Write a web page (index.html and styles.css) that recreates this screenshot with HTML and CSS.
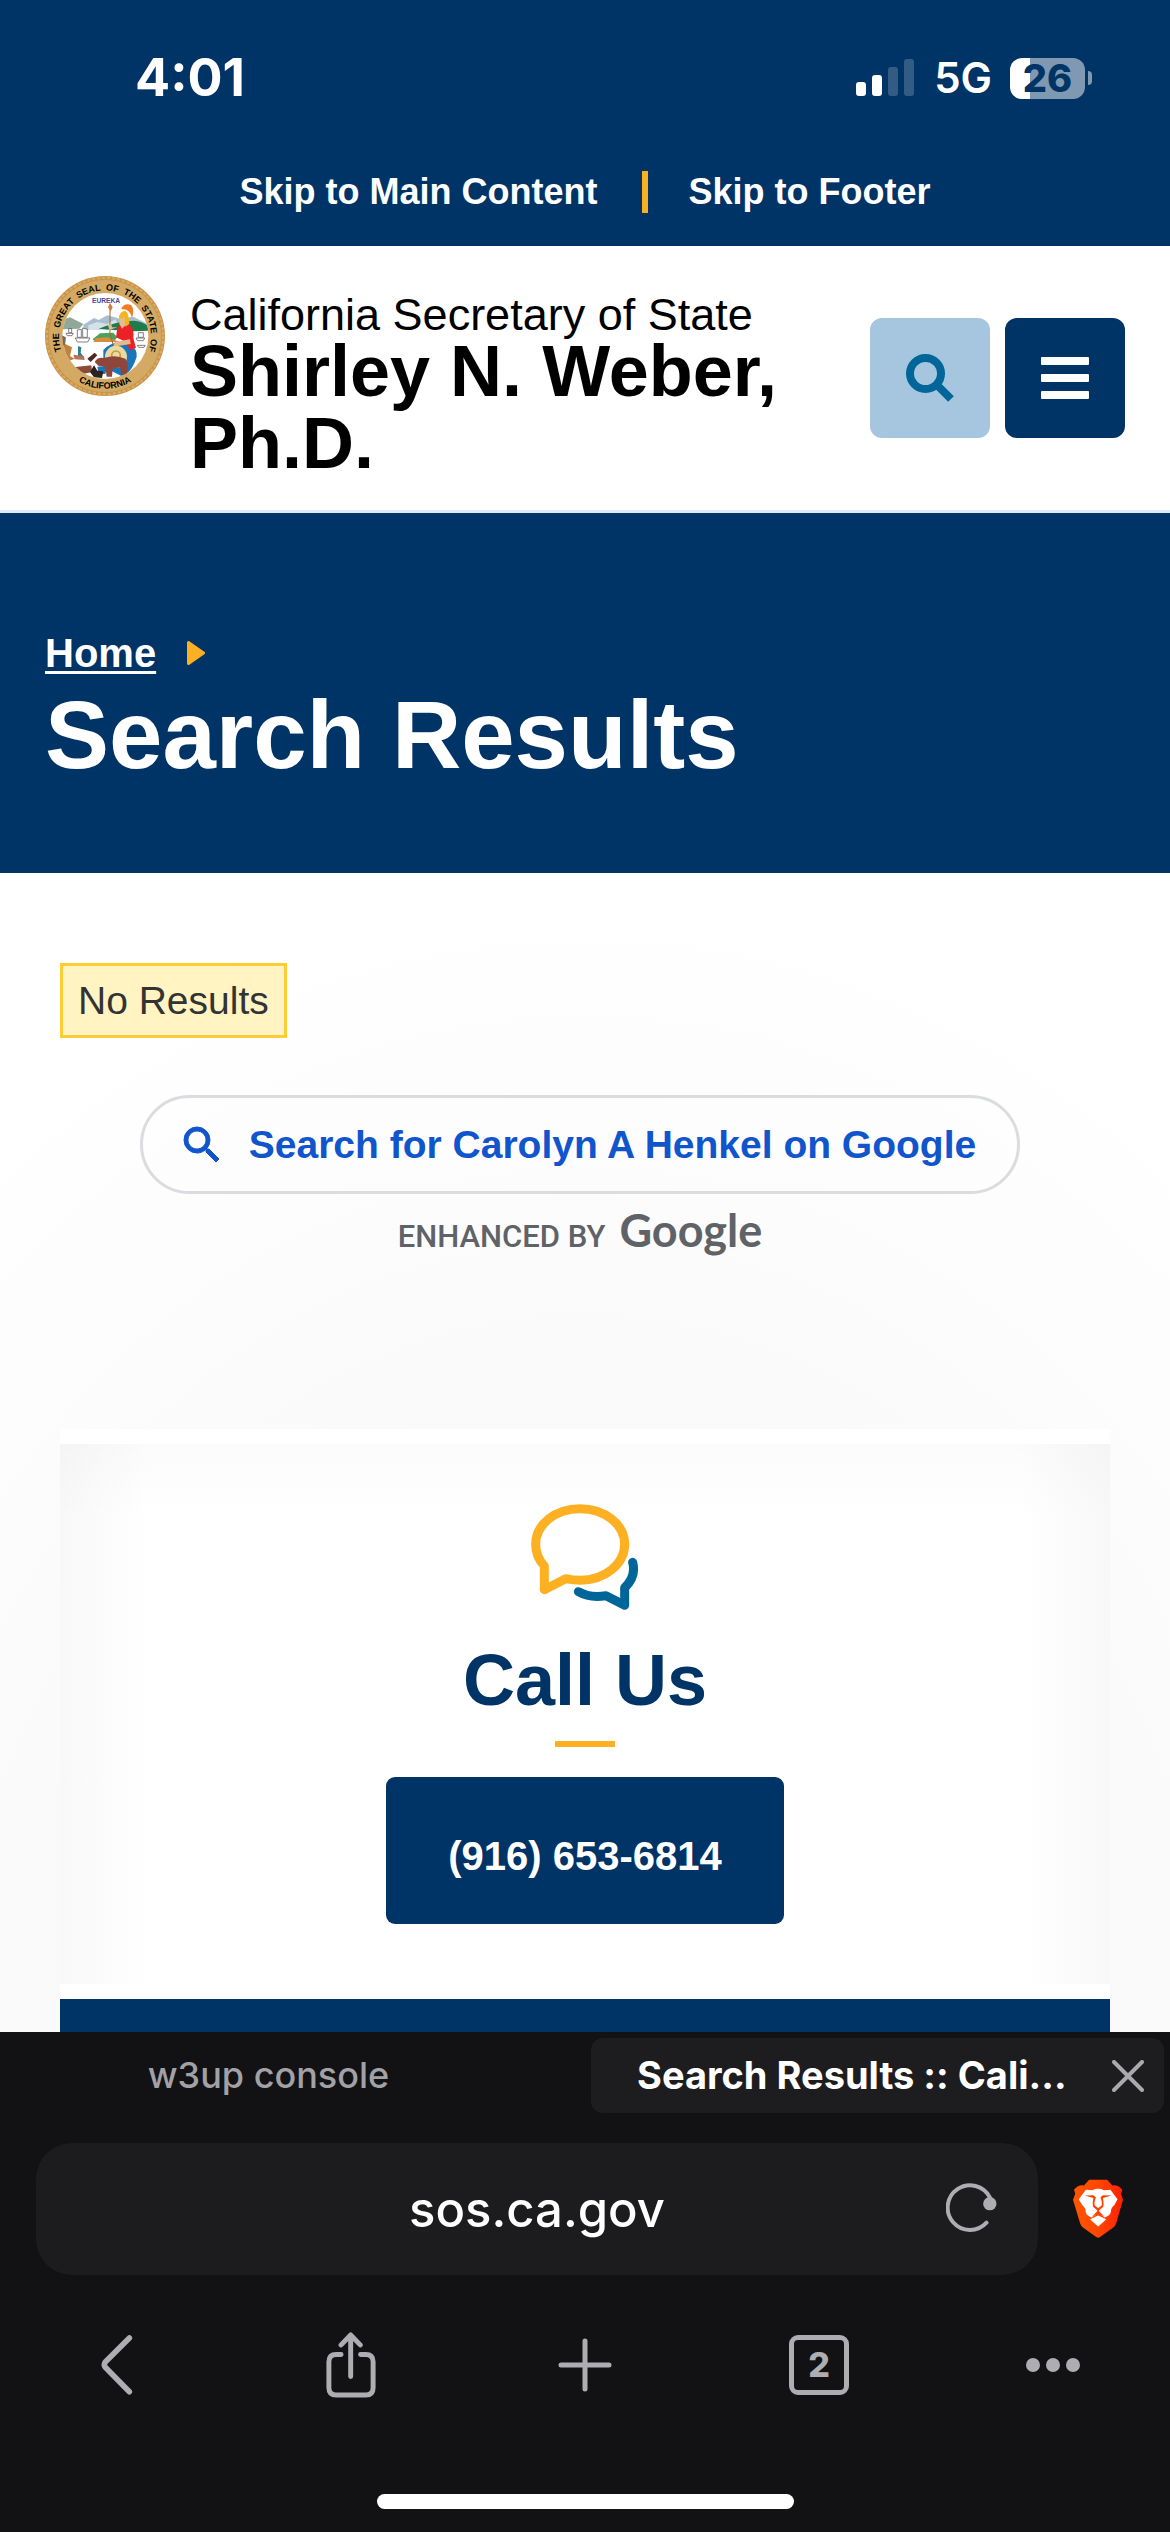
FILE: index.html
```html
<!DOCTYPE html>
<html lang="en">
<head>
<meta charset="utf-8">
<meta name="viewport" content="width=device-width, initial-scale=1">
<title>Search Results :: California Secretary of State</title>
<link rel="stylesheet" href="styles.css">
</head>
<body>
<div class="status">
  <span class="status-time">4:01</span>
  <div class="status-right">
    <svg class="signal" viewBox="0 0 58 38" aria-hidden="true">
      <rect x="0" y="23" width="10" height="14" rx="3"/>
      <rect x="16" y="16" width="10" height="21" rx="3"/>
      <rect class="dim" x="32" y="8" width="10" height="29" rx="3"/>
      <rect class="dim" x="48" y="0" width="10" height="37" rx="3"/>
    </svg>
    <span class="network">5G</span>
    <span class="battery"><span class="battery-level">26</span><span class="battery-tip"></span></span>
  </div>
</div>

<nav class="skip" aria-label="Skip links">
  <a href="#main">Skip to Main Content</a>
  <span class="skip-divider"></span>
  <a href="#footer">Skip to Footer</a>
</nav>

<header class="site-header">
  <svg class="seal" viewBox="0 0 120 120" role="img" aria-label="Seal of the State of California">
    <defs>
      <path id="ring-top" d="M21.5 85.5A46 46 0 1 1 98.5 85.5"/>
      <path id="ring-bottom" d="M14 86A53 53 0 0 0 106 86"/>
      <clipPath id="seal-inner"><circle cx="256" cy="258" r="129"/></clipPath>
    </defs>
    <circle cx="60" cy="60" r="60" fill="#c8954a"/>
    <circle cx="60" cy="60" r="58" fill="none" stroke="#dbab66" stroke-width="2" stroke-dasharray="3 2"/>
    <circle cx="60" cy="60" r="56" fill="#d3a963"/>
    <g transform="translate(-25 -26) scale(.33333)">
      <circle cx="256" cy="258" r="129" fill="#fff"/>
      <g clip-path="url(#seal-inner)">
        <path d="M120 212L150 202L190 222L178 236L120 238Z" fill="#8fa898"/>
        <path d="M190 224L222 204L236 210L262 196L300 206L340 200L392 226V240H190Z" fill="#a9bfcf"/>
        <path d="M205 226L232 216L262 222L286 208L302 240H205Z" fill="#d5e1e8"/>
        <path d="M236 236Q290 214 340 212Q376 214 400 242L340 244L280 240Z" fill="#1f7a4c"/>
        <path d="M218 268L240 250L280 248L292 262L280 276H226Z" fill="#4aa35c"/>
        <path d="M228 264L262 262L300 276H220Z" fill="#d88c3c"/>
        <g fill="#fff" stroke="#444" stroke-width="2">
          <path d="M166 264H210L203 276H172Z"/><path d="M172 240V262H184V238ZM188 234V262H202V238Z"/>
          <path d="M138 250H160L156 257H142ZM348 264H374L370 272H352ZM352 286H376L372 292H356Z"/>
          <path d="M355 248H370V262H355ZM146 236H155V248H146Z"/>
        </g>
        <path d="M126 258L138 262L136 282L156 292L150 318L164 326L140 336L122 300Z" fill="#c0803e"/>
        <path d="M126 256L136 262L134 286L124 290Z" fill="#6f6a66"/>
        <path d="M174 288L184 292L182 308L192 322L174 318Z" fill="#2b7f86"/>
        <path d="M160 314L192 318L194 330L164 328Z" fill="#b9705a"/>
        <path d="M202 326L224 308L232 316L212 336Z" fill="#4c2a1c"/>
        <path d="M160 352L214 346L216 366L190 372Z" fill="#8d4a38"/>
        <path d="M232 350L262 348L256 372H236Z" fill="#1a75bc"/>
        <path d="M250 300Q286 262 330 288Q352 294 350 320Q334 372 304 378L250 350Z" fill="#1a75bc"/>
        <path d="M292 234Q300 220 326 222Q344 236 340 264L348 294L332 300L310 272L288 262Z" fill="#ec2027"/>
        <path d="M270 176V250L280 286" fill="none" stroke="#9b6a35" stroke-width="3"/>
        <path d="M264 172L270 158L278 172L272 184Z" fill="#d37b42"/>
        <path d="M292 232L268 240L264 226L274 222L276 232ZM284 276L330 268L332 282L280 290Z" fill="#e8b98a"/>
        <path d="M298 196H318V224L306 236L298 222Z" fill="#e8b98a"/>
        <path d="M297 206Q298 184 316 182Q328 190 328 222L316 230L314 202Z" fill="#f3b51b"/>
        <path d="M304 174Q316 156 334 166Q344 180 336 204Q330 176 306 178Z" fill="#ef7c23"/>
        <circle cx="288" cy="320" r="33" fill="#ead9a0"/>
        <circle cx="288" cy="316" r="13" fill="none" stroke="#c79a3d" stroke-width="5"/>
        <path d="M224 336Q232 320 252 324Q286 312 316 326Q328 340 320 374H304L300 352L278 356L276 380H260L256 350L236 348Z" fill="#8e463a"/>
        <path d="M210 366L222 346L232 362L250 364L246 384L222 382Z" fill="#2a2320"/>
      </g>
      <text class="seal-motto" x="258" y="158" text-anchor="middle">EUREKA</text>
    </g>
    <text class="seal-text"><textPath href="#ring-top" startOffset="50%" text-anchor="middle">THE &#160;GREAT &#160;SEAL &#160;OF &#160;THE &#160;STATE &#160;OF</textPath></text>
    <text class="seal-text"><textPath href="#ring-bottom" startOffset="50%" text-anchor="middle">CALIFORNIA</textPath></text>
  </svg>
  <div class="brand">
    <p class="brand-office">California Secretary of State</p>
    <p class="brand-name">Shirley N. Weber, Ph.D.</p>
  </div>
  <div class="header-actions">
    <button class="square square-search" type="button" aria-label="Search">
      <svg viewBox="0 0 48 48" aria-hidden="true"><circle cx="19.500" cy="19.500" r="15.500" fill="none" stroke="#069" stroke-width="8"/><path d="M32 32L45 45" fill="none" stroke="#069" stroke-width="8"/></svg>
    </button>
    <button class="square square-menu" type="button" aria-label="Menu">
      <svg viewBox="0 0 48 48" aria-hidden="true"><rect y="3" width="48" height="8" rx="1"/><rect y="20" width="48" height="8" rx="1"/><rect y="37" width="48" height="8" rx="1"/></svg>
    </button>
  </div>
</header>

<section class="hero">
  <nav class="crumbs" aria-label="Breadcrumb">
    <a href="#home">Home</a>
    <svg viewBox="0 0 18 24" aria-hidden="true"><path d="M1.500 1.500L16.500 12L1.500 22.500Z" fill="#fdb022" stroke="#fdb022" stroke-width="3" stroke-linejoin="round"/></svg>
  </nav>
  <h1>Search Results</h1>
</section>

<main id="main" class="content">
  <p class="notice">No Results</p>
  <div class="google">
    <a class="google-link" href="#google">
      <svg viewBox="0 0 24 24" aria-hidden="true"><path fill="#15c" stroke="#15c" stroke-width=".5" d="M15.500 14h-.79l-.28-.27A6.471 6.471 0 0 0 16 9.500 6.500 6.500 0 1 0 9.500 16c1.610 0 3.090-.59 4.230-1.570l.27.28v.79l5 4.990L20.490 19l-4.990-5zm-6 0C7.010 14 5 11.990 5 9.500S7.010 5 9.500 5 14 7.010 14 9.500 11.990 14 9.500 14z"/></svg>
      <span>Search for Carolyn A Henkel on Google</span>
    </a>
    <p class="enhanced">ENHANCED BY <span class="google-word">Google</span></p>
  </div>
  <section class="card">
    <div class="card-body">
      <svg class="chat" viewBox="154 69 324 318" fill="none" stroke-width="27" stroke-linecap="round" stroke-linejoin="round" aria-hidden="true">
        <path stroke="#fdb022" d="M194 255V326L258 293C272 296 287 298 301 298C375 298 435 250 435 190C435 130 375 83 301 83C227 83 168 130 168 190C168 215 178 238 194 255Z"/>
        <path stroke="#069" d="M459 244C467 274 458 298 435 320V373L379 344C350 349 320 346 296 332"/>
      </svg>
      <h2>Call Us</h2>
      <span class="rule"></span>
      <a class="phone" href="tel:9166536814">(916) 653-6814</a>
    </div>
  </section>
  <div class="card-next"></div>
</main>

<footer id="footer" class="browser">
  <div class="tabs">
    <button class="tab" type="button">w3up console</button>
    <div class="tab-active">
      <button class="tab-title" type="button">Search Results :: Cali...</button>
      <button class="tab-close" type="button" aria-label="Close tab">
        <svg viewBox="0 0 32 32" aria-hidden="true"><path d="M2 2L30 30M30 2L2 30" stroke="#a9a9ae" stroke-width="4" stroke-linecap="round"/></svg>
      </button>
    </div>
  </div>
  <div class="address-row">
    <div class="address">
      <input type="text" value="sos.ca.gov" aria-label="Address">
      <button class="reload" type="button" aria-label="Reload">
        <svg viewBox="138 155 152 150" aria-hidden="true"><path d="M259 274A67 67 0 1 1 269 198" fill="none" stroke="#adadb2" stroke-width="12" stroke-linecap="round"/><circle cx="269" cy="217" r="20" fill="#adadb2"/></svg>
      </button>
    </div>
    <button class="brave" type="button" aria-label="Brave Shields">
      <svg viewBox="516 143 155 182" aria-hidden="true">
        <defs><linearGradient id="flame"><stop offset="0" stop-color="#ff5500"/><stop offset=".45" stop-color="#ff4a00"/><stop offset="1" stop-color="#ff2000"/></linearGradient></defs>
        <path fill="url(#flame)" d="M566 143H622L638 161Q654 157 669 174L665 187L671 205L650 278Q648 286 640 292L600 321Q594 325 588 321L548 292Q540 286 538 278L516 205L523 187L519 174Q534 157 550 161Z"/>
        <path fill="#fff" d="M556 174L576 176Q594 167 612 176L632 174L654 204L644 222Q632 232 634 242Q630 256 614 260L598 248L594 245L590 248L574 260Q558 256 555 242Q557 232 545 222L534 204Z"/>
        <path fill="#ff4200" d="M552 192L580 191L587 198Q580 214 584 224L594 231L604 224Q608 214 601 198L608 191L636 192L609 200Q612 216 610 227L597 238V241L614 258L594 247L574 258L591 241V238L578 227Q576 216 579 200Z"/>
        <path fill="#fff" d="M569 266L594 254L619 266Q606 279 594 288Q582 279 569 266Z"/>
      </svg>
    </button>
  </div>
  <nav class="toolbar" aria-label="Browser">
    <button type="button" aria-label="Back"><svg class="icon-back" viewBox="62 71 95 182" aria-hidden="true"><path d="M147 80L74 153Q68 161 74 169L147 243" stroke-width="17"/></svg></button>
    <button type="button" aria-label="Share"><svg class="icon-share" viewBox="738 62 150 200" aria-hidden="true"><path d="M783 130H768Q746 130 746 152V231Q746 253 768 253H858Q880 253 880 231V152Q880 130 858 130H842M812 72V197M783 101L812 71L841 101" stroke-width="15"/></svg></button>
    <button type="button" aria-label="New tab"><svg class="icon-plus" viewBox="0 0 54 54" aria-hidden="true"><path d="M27 3V51M3 27H51" stroke-width="5"/></svg></button>
    <button type="button" aria-label="Tabs"><span class="tab-count">2</span></button>
    <button type="button" aria-label="More"><svg class="icon-more" viewBox="0 0 54 14" aria-hidden="true"><g fill="#adadb2" stroke="none"><circle cx="7" cy="7" r="7"/><circle cx="27" cy="7" r="7"/><circle cx="47" cy="7" r="7"/></g></svg></button>
  </nav>
  <div class="home-bar"></div>
</footer>
</body>
</html>
```
FILE: styles.css
```css
* { box-sizing: border-box; }
body {
  margin: 0;
  background: #fff;
  color: #000;
  font-family: "Liberation Sans", Arial, Helvetica, sans-serif;
}
h1, h2, p { margin: 0; }
svg { display: block; flex: none; }
button {
  margin: 0;
  padding: 0;
  border: 0;
  background: none;
  color: inherit;
  font: inherit;
}

/* Phone status bar */
.status {
  display: flex;
  justify-content: space-between;
  align-items: center;
  height: 141px;
  padding: 15px 78px 0 135px;
  background: #036;
  color: #fff;
  font-family: Inter, sans-serif;
}
.status-time { font-size: 52px; line-height: 60px; font-weight: 700; }
.status-right { display: flex; align-items: center; }
.signal { width: 58px; height: 38px; fill: #fff; }
.signal .dim { fill: #335c85; }
.network { margin: 0 18px 0 20px; font-size: 42px; line-height: 50px; font-weight: 600; }
.battery { display: flex; align-items: center; gap: 3px; }
.battery-level {
  width: 75px;
  border-radius: 12px;
  background: linear-gradient(90deg, #fff 20px, #8099b3 20px);
  color: #036;
  font-size: 38px;
  line-height: 41px;
  font-weight: 800;
  text-align: center;
}
.battery-tip { width: 4px; height: 14px; border-radius: 0 4px 4px 0; background: #8099b3; }

/* Skip links */
.skip {
  display: flex;
  justify-content: center;
  align-items: center;
  padding: 30px 45px 33px;
  background: #036;
  font-size: 36px;
  line-height: 42px;
  font-weight: 700;
}
.skip a { color: #fff; text-decoration: none; }
.skip-divider { width: 6px; height: 42px; margin: 0 40px 0 45px; background: #fdb022; }

/* Site header */
.site-header {
  display: flex;
  align-items: flex-start;
  padding: 30px 45px 31px;
  border-bottom: 3px solid #dcebf7;
}
.seal { width: 120px; height: 120px; }
.seal-text { font: 700 9px "Liberation Sans", sans-serif; }
.seal-motto { font: 700 20px "Liberation Sans", sans-serif; fill: #4a4596; }
.brand { flex: 1; min-width: 0; padding: 19px 45px 0 25px; }
.brand-office { font-size: 45px; line-height: 40px; }
.brand-name { font-size: 72px; line-height: 72px; font-weight: 700; }
.header-actions { display: flex; align-self: center; gap: 15px; }
.square {
  display: flex;
  justify-content: center;
  align-items: center;
  width: 120px;
  height: 120px;
  border-radius: 12px;
}
.square svg { width: 48px; height: 48px; }
.square-search { background: #a6c5df; }
.square-menu { background: #036; fill: #fff; }

/* Page title */
.hero { padding: 106px 45px 90px; background: #036; color: #fff; }
.crumbs { display: flex; align-items: center; gap: 31px; font-size: 40px; line-height: 68px; font-weight: 700; }
.crumbs a { color: #fff; text-decoration-thickness: 3px; text-underline-offset: 4px; }
.crumbs svg { width: 18px; height: 24px; }
h1 { font-size: 96px; line-height: 96px; font-weight: 700; }

/* Results */
.content {
  padding: 90px 60px 0;
  background: radial-gradient(ellipse 1000px 1200px at 50% 1200px, #f3f3f3, #fff);
}
.notice {
  width: fit-content;
  padding: 12px 15px;
  border: 3px solid #fc3;
  background: #fff4c2;
  color: #333;
  font-size: 39px;
  line-height: 45px;
}
.google {
  display: flex;
  flex-direction: column;
  align-items: center;
  padding: 57px 10px 164px 0;
}
.google-link {
  display: flex;
  align-items: center;
  gap: 23px;
  padding: 22px 41px 22px 35px;
  border: 3px solid #dadce0;
  border-radius: 50px;
  color: #15c;
  font-size: 39px;
  line-height: 49px;
  font-weight: 700;
  text-decoration: none;
}
.google-link svg { width: 48px; height: 48px; }
.enhanced {
  display: flex;
  align-items: baseline;
  gap: 14px;
  margin-top: 8px;
  color: #5f6368;
  font: 500 31px/56px Roboto, sans-serif;
}
.google-word { font: 700 45px/56px Lato, sans-serif; }

/* Contact card */
.card { padding: 15px 0; background: #fff; }
.card-body {
  display: flex;
  flex-direction: column;
  align-items: center;
  padding: 60px 45px;
  background:
    linear-gradient(rgba(0, 0, 0, .015), transparent 75px),
    linear-gradient(90deg, #f8f8f8, #fff 90px, #fff calc(100% - 90px), #f8f8f8);
}
.chat { width: 108px; height: 106px; }
h2 { margin-top: 34px; color: #036; font-size: 72px; line-height: 72px; font-weight: 700; }
.rule { width: 60px; height: 6px; margin: 25px 0 30px; background: #fdb022; }
.phone {
  padding: 54px 62px 42px;
  border-radius: 9px;
  background: #036;
  color: #fff;
  font-size: 40px;
  line-height: 51px;
  font-weight: 700;
  text-decoration: none;
}
.card-next { height: 33px; background: #036; }

/* Browser controls */
.browser { padding: 6px 0 24px; background: #121214; color: #fff; font-family: Inter, sans-serif; }
.tabs { display: grid; grid-template-columns: 1fr 1fr; gap: 12px; padding: 0 6px; line-height: 75px; }
.tab { padding-right: 48px; color: #a1a1a6; font-size: 36px; font-weight: 500; }
.tab-active {
  display: flex;
  align-items: center;
  justify-content: space-between;
  min-width: 0;
  padding: 0 20px 0 46px;
  border-radius: 12px;
  background: #1d1d1f;
}
.tab-title { font-size: 38px; font-weight: 700; font-feature-settings: "calt" 0; white-space: nowrap; }
.tab-close svg { width: 32px; height: 32px; }
.address-row { display: flex; align-items: center; gap: 35px; padding: 30px 47px 0 36px; }
.address { position: relative; flex: 1; }
.address input {
  display: block;
  width: 100%;
  height: 132px;
  padding: 0 100px;
  border: 0;
  border-radius: 36px;
  background: #1c1c1e;
  color: #fff;
  font: 500 49px/60px Inter, sans-serif;
  text-align: center;
}
.reload { position: absolute; top: 40px; right: 41px; }
.reload svg { width: 51px; height: 50px; }
.brave svg { width: 50px; height: 60px; }
.toolbar { display: grid; grid-template-columns: repeat(5, 1fr); padding: 57px 0 96px; }
.toolbar button { display: flex; justify-content: center; align-items: center; height: 66px; }
.toolbar svg { fill: none; stroke: #adadb2; stroke-linecap: round; stroke-linejoin: round; }
.icon-back { width: 32px; height: 60px; }
.icon-share { width: 50px; height: 66px; }
.icon-plus { width: 54px; height: 54px; }
.icon-more { width: 54px; height: 14px; }
.tab-count {
  width: 60px;
  border: 5px solid #adadb2;
  border-radius: 9px;
  color: #adadb2;
  font-size: 34px;
  line-height: 50px;
  font-weight: 800;
}
.home-bar { width: 36%; max-width: 417px; height: 15px; margin: 0 auto; border-radius: 8px; background: #fff; }
```
